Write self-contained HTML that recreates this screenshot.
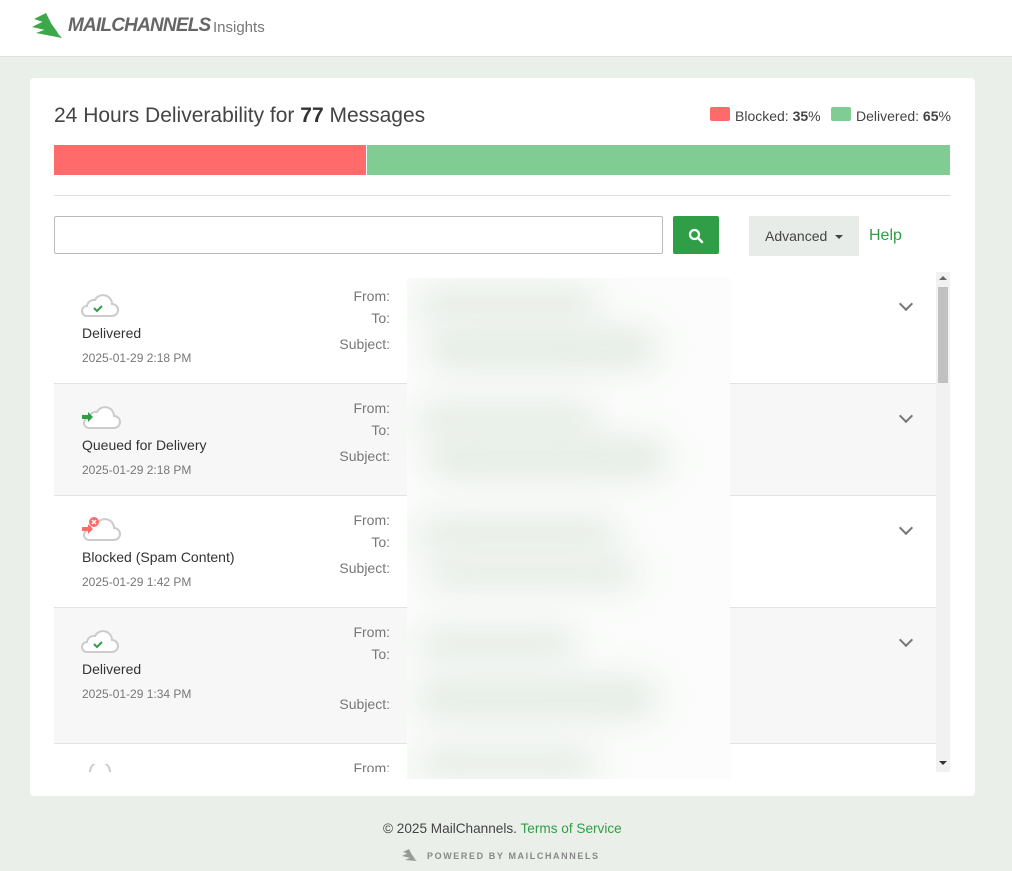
<!DOCTYPE html>
<html><head><style>
*{box-sizing:border-box;margin:0;padding:0}
body{width:1012px;height:871px;background:#eaefea;font-family:"Liberation Sans",sans-serif;position:relative;overflow:hidden;color:#333}
.hdr{position:absolute;left:0;top:0;width:1012px;height:57px;background:#fff;border-bottom:1px solid #dde3dd}
.card{position:absolute;left:30px;top:78px;width:945px;height:718px;background:#fff;border-radius:4px}
.abs{position:absolute}
.row{position:absolute;left:54px;width:882px;border-bottom:1px solid #e3e3e3}
.lbl{position:absolute;font-size:14px;color:#777;text-align:right}
.st{position:absolute;font-size:14px;color:#333}
.dt{position:absolute;font-size:12px;color:#777}
.chev{position:absolute;width:10px;height:10px;border-right:2px solid #777;border-bottom:2px solid #777;transform:rotate(45deg)}
.blob{position:absolute;background:#e4ebe4;filter:blur(16px);border-radius:30px}
</style></head><body>
<div class="hdr">
<svg class="abs" style="left:32px;top:11px" width="34" height="28" viewBox="0 0 34 28"><path d="M2 8 L14 2 L20 14 Z" fill="#3da84a"/><path d="M0 16 L16 8 L26 22 Z" fill="#3da84a"/><path d="M4 22 L20 16 L30 27 Z" fill="#3da84a"/></svg>
<div class="abs" style="left:68px;top:15px;font-size:19px;font-weight:bold;font-style:italic;color:#666;letter-spacing:-0.8px">MAILCHANNELS</div>
<div class="abs" style="left:213px;top:19px;font-size:15px;color:#777">Insights</div>
</div>
<div class="card"></div>
<div class="abs" style="left:54px;top:104px;font-size:21px;color:#444">24 Hours Deliverability for <b style="color:#333">77</b> Messages</div>
<div class="abs" style="left:710px;top:107px;width:20px;height:14px;background:#ff6b6b;border-radius:2px"></div>
<div class="abs" style="left:735px;top:108px;font-size:14px;color:#444">Blocked: <b>35</b>%</div>
<div class="abs" style="left:831px;top:107px;width:20px;height:14px;background:#80cc92;border-radius:2px"></div>
<div class="abs" style="left:856px;top:108px;font-size:14px;color:#444">Delivered: <b>65</b>%</div>
<div class="abs" style="left:54px;top:145px;width:312px;height:30px;background:#ff6b6b"></div>
<div class="abs" style="left:367px;top:145px;width:583px;height:30px;background:#80cc92"></div>
<div class="abs" style="left:54px;top:195px;width:896px;height:1px;background:#ddd"></div>
<div class="abs" style="left:54px;top:216px;width:609px;height:38px;border:1px solid #bbb;border-radius:2px"></div>
<div class="abs" style="left:673px;top:216px;width:46px;height:38px;background:#2f9e47;border-radius:2px"></div>
<svg class="abs" style="left:688px;top:228px" width="16" height="16" viewBox="0 0 16 16"><circle cx="6.5" cy="6.5" r="4.5" fill="none" stroke="#fff" stroke-width="2.2"/><path d="M10 10 L14 14" stroke="#fff" stroke-width="2.6" stroke-linecap="round"/></svg>
<div class="abs" style="left:749px;top:216px;width:110px;height:40px;background:#e8ece8;font-size:14px;color:#444;line-height:40px;padding-left:16px">Advanced <span style="display:inline-block;border-left:4px solid transparent;border-right:4px solid transparent;border-top:4px solid #444;vertical-align:middle;margin-left:4px"></span></div>
<div class="abs" style="left:869px;top:227px;font-size:16px;color:#2f9e47">Help</div>

<div class="row" style="top:272px;height:112px;background:#fff"></div>
<div class="row" style="top:384px;height:112px;background:#f7f7f7"></div>
<div class="row" style="top:496px;height:112px;background:#fff"></div>
<div class="row" style="top:608px;height:136px;background:#f7f7f7"></div>
<div class="row" style="top:744px;height:28px;background:#fff;border:none;overflow:hidden"></div>

<svg class="abs" style="left:81px;top:292px" width="38" height="26" viewBox="0 0 38 26"><path d="M6 24 H31 A6 6 0 0 0 31 12 A9 9 0 0 0 14 8 A7 7 0 0 0 6 14 A5 5 0 0 0 6 24 Z" fill="#fff" stroke="#ccc" stroke-width="2"/><path d="M13 16 l3 3 l5 -5" stroke="#2f9e47" stroke-width="2" fill="none"/></svg>
<div class="st" style="left:82px;top:325px">Delivered</div><div class="dt" style="left:82px;top:351px">2025-01-29 2:18 PM</div>
<svg class="abs" style="left:81px;top:404px" width="40" height="26" viewBox="0 0 40 26"><path d="M8 24 H33 A6 6 0 0 0 33 12 A9 9 0 0 0 16 8 A7 7 0 0 0 8 14 A5 5 0 0 0 8 24 Z" fill="#fff" stroke="#ccc" stroke-width="2"/><path d="M1 11 h6 v-3 l5 5 l-5 5 v-3 h-6z" fill="#2f9e47"/></svg>
<div class="st" style="left:82px;top:437px">Queued for Delivery</div><div class="dt" style="left:82px;top:463px">2025-01-29 2:18 PM</div>
<svg class="abs" style="left:81px;top:516px" width="40" height="26" viewBox="0 0 40 26"><path d="M8 24 H33 A6 6 0 0 0 33 12 A9 9 0 0 0 16 8 A7 7 0 0 0 8 14 A5 5 0 0 0 8 24 Z" fill="#fff" stroke="#ccc" stroke-width="2"/><path d="M1 11 h6 v-3 l5 5 l-5 5 v-3 h-6z" fill="#ff6b6b"/><circle cx="13" cy="6" r="5" fill="#ff6b6b"/><path d="M11 4 l4 4 M15 4 l-4 4" stroke="#fff" stroke-width="1.4"/></svg>
<div class="st" style="left:82px;top:549px">Blocked (Spam Content)</div><div class="dt" style="left:82px;top:575px">2025-01-29 1:42 PM</div>
<svg class="abs" style="left:81px;top:628px" width="38" height="26" viewBox="0 0 38 26"><path d="M6 24 H31 A6 6 0 0 0 31 12 A9 9 0 0 0 14 8 A7 7 0 0 0 6 14 A5 5 0 0 0 6 24 Z" fill="#fff" stroke="#ccc" stroke-width="2"/><path d="M13 16 l3 3 l5 -5" stroke="#2f9e47" stroke-width="2" fill="none"/></svg>
<div class="st" style="left:82px;top:661px">Delivered</div><div class="dt" style="left:82px;top:687px">2025-01-29 1:34 PM</div>
<svg class="abs" style="left:88px;top:764px" width="26" height="8" viewBox="0 0 26 8"><path d="M2 8 A9 9 0 0 1 22 8" fill="none" stroke="#ccc" stroke-width="2"/></svg>

<div class="lbl" style="top:288px;left:300px;width:90px">From:</div><div class="lbl" style="top:310px;left:300px;width:90px">To:</div><div class="lbl" style="top:336px;left:300px;width:90px">Subject:</div>
<div class="lbl" style="top:400px;left:300px;width:90px">From:</div><div class="lbl" style="top:422px;left:300px;width:90px">To:</div><div class="lbl" style="top:448px;left:300px;width:90px">Subject:</div>
<div class="lbl" style="top:512px;left:300px;width:90px">From:</div><div class="lbl" style="top:534px;left:300px;width:90px">To:</div><div class="lbl" style="top:560px;left:300px;width:90px">Subject:</div>
<div class="lbl" style="top:624px;left:300px;width:90px">From:</div><div class="lbl" style="top:646px;left:300px;width:90px">To:</div><div class="lbl" style="top:696px;left:300px;width:90px">Subject:</div>
<div class="lbl" style="top:760px;left:300px;width:90px;height:12px;overflow:hidden">From:</div>

<div class="abs" style="left:407px;top:278px;width:323px;height:501px;background:#fbfcfb;overflow:hidden">
<div class="blob" style="left:10px;top:10px;width:180px;height:30px"></div>
<div class="blob" style="left:20px;top:50px;width:230px;height:40px"></div>
<div class="blob" style="left:10px;top:125px;width:180px;height:30px"></div>
<div class="blob" style="left:20px;top:160px;width:240px;height:40px"></div>
<div class="blob" style="left:10px;top:240px;width:200px;height:30px"></div>
<div class="blob" style="left:20px;top:280px;width:210px;height:30px"></div>
<div class="blob" style="left:10px;top:350px;width:160px;height:30px"></div>
<div class="blob" style="left:10px;top:400px;width:240px;height:40px"></div>
<div class="blob" style="left:10px;top:470px;width:180px;height:30px"></div>
</div>

<div class="chev" style="left:901px;top:299px"></div>
<div class="chev" style="left:901px;top:411px"></div>
<div class="chev" style="left:901px;top:523px"></div>
<div class="chev" style="left:901px;top:635px"></div>

<div class="abs" style="left:936px;top:272px;width:14px;height:500px;background:#f1f1f1"></div>
<div class="abs" style="left:938px;top:287px;width:10px;height:96px;background:#c1c1c1"></div>
<div class="abs" style="left:939px;top:276px;border-left:4px solid transparent;border-right:4px solid transparent;border-bottom:4px solid #666"></div>
<div class="abs" style="left:939px;top:761px;border-left:4px solid transparent;border-right:4px solid transparent;border-top:4px solid #333"></div>

<div class="abs" style="left:383px;top:821px;font-size:13.6px;color:#444;white-space:nowrap">© 2025 MailChannels. <span style="color:#2f9e47">Terms of Service</span></div>
<svg class="abs" style="left:402px;top:848px" width="16" height="13" viewBox="0 0 16 13"><path d="M1 4 L7 1 L10 7Z M0 8 L8 4 L13 11Z M3 12 L10 9 L15 13Z" fill="#999"/></svg>
<div class="abs" style="left:427px;top:851px;font-size:9px;letter-spacing:1.6px;color:#888;font-weight:bold">POWERED BY MAILCHANNELS</div>
</body></html>
